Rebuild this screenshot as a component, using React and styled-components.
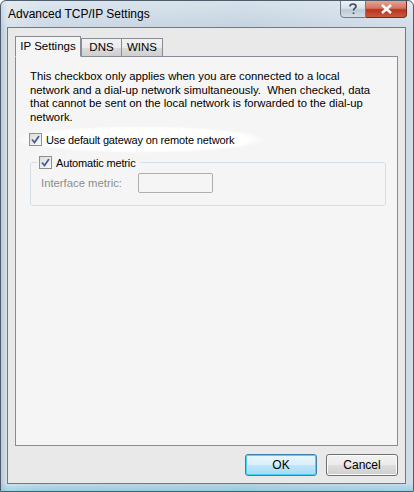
import React, { useState } from "react";
import styled, { createGlobalStyle } from "styled-components";

const GlobalStyle = createGlobalStyle`
  html, body {
    margin: 0;
    padding: 0;
    background: #ffffff;
  }
  * {
    box-sizing: border-box;
  }
`;

const Window = styled.div`
  width: 414px;
  height: 492px;
  display: flex;
  flex-direction: column;
  font-family: "Liberation Sans", Arial, sans-serif;
  font-size: 11px;
  color: #000;
  background:
    linear-gradient(180deg, rgba(255, 255, 255, 0.35), rgba(255, 255, 255, 0) 30px),
    linear-gradient(0deg, rgba(80, 200, 225, 0.45) 0px, rgba(80, 200, 225, 0) 8px),
    linear-gradient(90deg, #b9cadb 0px, #d7e1ea 6px, #cbd8e4 40px, #c2d2e0 60%, #d0dce7 100%);
  border: 1px solid #4d5d6c;
  border-radius: 6px 6px 0 0;
  overflow: hidden;
`;

const TitleBar = styled.div`
  height: 26px;
  display: flex;
  align-items: flex-start;
  justify-content: space-between;
  padding-left: 7px;
`;

const Title = styled.div`
  font-family: "Liberation Sans", Arial, sans-serif;
  font-size: 12px;
  padding-top: 6px;
  color: #000;
`;

const Caption = styled.div`
  display: flex;
  margin-right: 6px;
  margin-top: -1px;
`;

const CaptionButton = styled.div`
  height: 18px;
  width: ${(p) => (p.close ? "41px" : "26px")};
  display: flex;
  align-items: center;
  justify-content: center;
  border: 1px solid ${(p) => (p.close ? "#6e2a24" : "#6f7d8a")};
  border-left: ${(p) => (p.close ? "none" : "1px solid #6f7d8a")};
  border-radius: ${(p) => (p.close ? "0 0 4px 0" : "0 0 0 4px")};
  background: ${(p) =>
    p.close
      ? "linear-gradient(180deg, #e7a493 0%, #d47463 45%, #b8321c 55%, #c95b3d 100%)"
      : "linear-gradient(180deg, #eef3f7 0%, #d7e1ea 45%, #bccad7 55%, #d3dde6 100%)"};
`;

const Client = styled.div`
  flex: 1;
  margin: 0 7px 7px 6px;
  border: 1px solid #6f7a84;
  background: #e9e9e9;
  display: flex;
  flex-direction: column;
  padding: 7px;
`;

const Tabs = styled.div`
  display: flex;
  align-items: flex-end;
  height: 21px;
`;

const Tab = styled.div`
  height: ${(p) => (p.active ? "21px" : "18px")};
  padding-top: ${(p) => (p.active ? "3px" : "2px")};
  margin-right: ${(p) => (p.active ? "0" : "-1px")};
  border: 1px solid #898c95;
  border-bottom: ${(p) => (p.active ? "1px solid #f5f5f5" : "none")};
  background: ${(p) =>
    p.active ? "#f5f5f5" : "linear-gradient(180deg, #f2f2f2 0%, #ebebeb 50%, #dcdcdc 51%, #cfcfcf 100%)"};
  font-size: 11.5px;
  white-space: nowrap;
  text-align: center;
  position: relative;
  z-index: ${(p) => (p.active ? 2 : 1)};
  margin-bottom: ${(p) => (p.active ? "-1px" : "0")};
  width: ${(p) => p.w}px;
`;

const Panel = styled.div`
  flex: 1;
  border: 1px solid #898c95;
  background: #f5f5f5;
  padding: 13px 14px 0 14px;
  display: flex;
  flex-direction: column;
`;

const Para = styled.p`
  margin: 0;
  font-size: 11.3px;
  line-height: 13.5px;
  white-space: nowrap;
`;

const GlowRow = styled.div`
  margin: 2px 0 0 -14px;
  padding: 7px 0 7px 13px;
  width: 250px;
  border-radius: 50%;
  background: radial-gradient(ellipse at center, #ffffff 60%, rgba(255, 255, 255, 0) 71%);
`;

const CheckLabel = styled.label`
  display: flex;
  align-items: center;
  gap: 4px;
  font-size: 11px;
  letter-spacing: -0.15px;
  white-space: nowrap;
`;

const Box = styled.span`
  width: 13px;
  height: 13px;
  border: 1px solid #8e8f8f;
  background: linear-gradient(135deg, #dcdcdc, #fbfbfb);
  display: inline-flex;
  align-items: center;
  justify-content: center;
  flex-shrink: 0;
`;

const Group = styled.fieldset`
  margin: 3px 0 0 0;
  padding: 4px 10px 12px 10px;
  border: 1px solid #d5dfe5;
  border-radius: 3px;
  width: 356px;
`;

const Legend = styled.legend`
  padding: 0 4px 0 2px;
  margin-left: -4px;
`;

const MetricRow = styled.div`
  display: flex;
  align-items: center;
`;

const MetricLabel = styled.span`
  color: #8d8d8d;
  font-size: 11.3px;
  width: 97px;
`;

const MetricInput = styled.div`
  width: 75px;
  height: 20px;
  border: 1px solid #aeaeae;
  border-radius: 2px;
  background: #f5f5f5;
`;

const ButtonRow = styled.div`
  display: flex;
  justify-content: flex-end;
  gap: 9px;
  padding-top: 8px;
`;

const Button = styled.button`
  width: 72px;
  height: 22px;
  font-family: "Liberation Sans", Arial, sans-serif;
  font-size: 12px;
  color: #000;
  border: 1px solid ${(p) => (p.primary ? "#3c7fb1" : "#707070")};
  border-radius: 3px;
  background: ${(p) =>
    p.primary
      ? "linear-gradient(180deg, #eaf6fd 0%, #d9f0fc 50%, #bee6fd 51%, #a7d9f5 100%)"
      : "linear-gradient(180deg, #f2f2f2 0%, #ebebeb 50%, #dddddd 51%, #cfcfcf 100%)"};
  box-shadow: ${(p) => (p.primary ? "inset 0 0 0 1px #48d2f6" : "inset 0 0 0 1px #fcfcfc")};
  padding: 0;
`;

function CheckMark() {
  return (
    <svg width="9" height="9" viewBox="0 0 9 9">
      <path d="M1 4.5 L3.5 7.5 L8 1" fill="none" stroke="#4a5f97" strokeWidth="1.8" />
    </svg>
  );
}

function Check({ label, checked }) {
  return (
    <CheckLabel>
      <Box>{checked && <CheckMark />}</Box>
      {label}
    </CheckLabel>
  );
}

export default function App() {
  const [tab] = useState("ip");
  const tabs = [
    { id: "ip", label: "IP Settings", w: 66 },
    { id: "dns", label: "DNS", w: 41 },
    { id: "wins", label: "WINS", w: 42 },
  ];

  return (
    <>
      <GlobalStyle />
      <Window>
        <TitleBar>
          <Title>Advanced TCP/IP Settings</Title>
          <Caption>
            <CaptionButton>
              <svg width="10" height="12" viewBox="0 0 10 12">
                <path
                  d="M2 3.5 C2 1.5 3.5 1 5 1 C6.5 1 8 1.8 8 3.4 C8 5 5.5 5.5 5.5 7.5 M5.5 9.5 L5.5 11"
                  fill="none"
                  stroke="#3e4c59"
                  strokeWidth="1.6"
                />
              </svg>
            </CaptionButton>
            <CaptionButton close>
              <svg width="13" height="10" viewBox="0 0 13 10">
                <path d="M2 1 L11 9 M11 1 L2 9" stroke="#ffffff" strokeWidth="2.6" />
              </svg>
            </CaptionButton>
          </Caption>
        </TitleBar>
        <Client>
          <Tabs>
            {tabs.map((t) => (
              <Tab key={t.id} active={t.id === tab} w={t.w}>
                {t.label}
              </Tab>
            ))}
          </Tabs>
          <Panel>
            <Para>
              This checkbox only applies when you are connected to a local
              <br />
              network and a dial-up network simultaneously.&nbsp; When checked, data
              <br />
              that cannot be sent on the local network is forwarded to the dial-up
              <br />
              network.
            </Para>
            <GlowRow>
              <Check label="Use default gateway on remote network" checked />
            </GlowRow>
            <Group>
              <Legend>
                <Check label="Automatic metric" checked />
              </Legend>
              <MetricRow>
                <MetricLabel>Interface metric:</MetricLabel>
                <MetricInput />
              </MetricRow>
            </Group>
          </Panel>
          <ButtonRow>
            <Button primary>OK</Button>
            <Button>Cancel</Button>
          </ButtonRow>
        </Client>
      </Window>
    </>
  );
}
